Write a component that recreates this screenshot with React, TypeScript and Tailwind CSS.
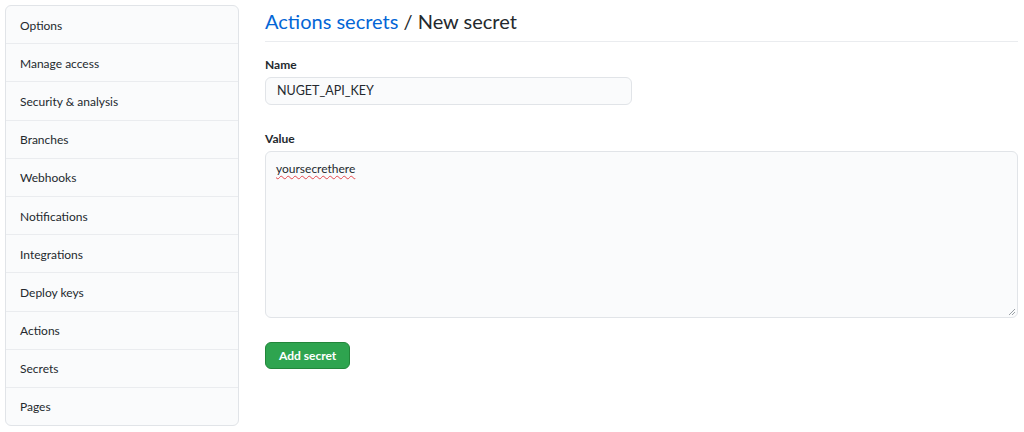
import React from 'react';

const SettingsMenu = () => {
  const items = [
    'Options',
    'Manage access',
    'Security & analysis',
    'Branches',
    'Webhooks',
    'Notifications',
    'Integrations',
    'Deploy keys',
    'Actions',
    'Secrets',
    'Pages',
  ];

  return (
    <nav className="w-[234px] h-[421px] shrink-0 rounded-md border border-[#e1e4e8] bg-[#fafbfc] flex flex-col">
      {items.map((item, index) => (
        <div
          key={item}
          className={`flex-1 flex items-center px-[14px] pt-[2px] text-[12px] text-[#24292e] ${
            index < items.length - 1 ? 'border-b border-[#eaecef]' : ''
          }`}
        >
          {item}
        </div>
      ))}
    </nav>
  );
};

const App = () => {
  return (
    <div className="w-[1024px] h-[432px] bg-white flex gap-[26px] pl-[5px] pt-[5px] pr-[6px] font-['Lato',sans-serif] overflow-hidden">
      <SettingsMenu />

      <div className="flex-1 flex flex-col">
        {/* Page title */}
        <div className="border-b border-[#eaecef] h-[37px] flex items-start">
          <h2 className="text-[20px] leading-[32px] text-[#24292e]">
            <span className="text-[#0366d6]">Actions secrets</span> / New secret
          </h2>
        </div>

        <form className="flex flex-col">
          <label className="mt-[15px] text-[12px] font-bold text-[#24292e] leading-[16px]">Name</label>
          <div className="mt-[4px] w-[367px] h-[28px] rounded-md border border-[#e1e4e8] bg-[#fafbfc] flex items-center px-[11px] text-[12.5px] text-[#24292e]">
            NUGET_API_KEY
          </div>

          <label className="mt-[26px] text-[12px] font-bold text-[#24292e] leading-[16px]">Value</label>
          <div className="relative mt-[4px] h-[167px] rounded-md border border-[#e1e4e8] bg-[#fafbfc] px-[10px] pt-[8px] text-[12px] text-[#24292e]">
            <span className="underline decoration-wavy decoration-[#e5484d] decoration-1 underline-offset-2">yoursecrethere</span>
            <svg className="absolute right-[1px] bottom-[1px]" width="9" height="9" viewBox="0 0 9 9">
              <path d="M8 2 L2 8 M8 5 L5 8" stroke="#9aa0a6" strokeWidth="1" />
            </svg>
          </div>

          <div className="mt-[24px]">
            <button
              type="button"
              className="h-[27px] pt-[1px] px-[13px] rounded-md border border-[#22863a] bg-[#2ea44f] text-white text-[12px] font-bold"
            >
              Add secret
            </button>
          </div>
        </form>
      </div>
    </div>
  );
};

export default App;
